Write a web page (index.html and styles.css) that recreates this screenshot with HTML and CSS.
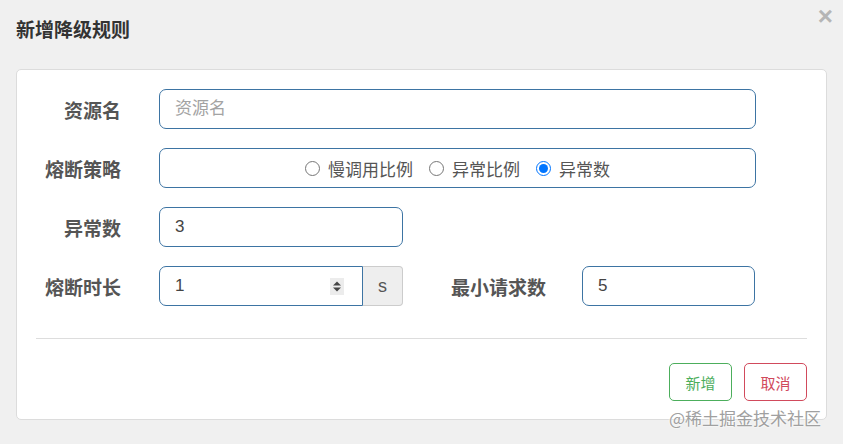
FILE: index.html
```html
<!DOCTYPE html>
<html lang="zh">
<head>
<meta charset="utf-8">
<title>新增降级规则</title>
<link rel="stylesheet" href="styles.css">
</head>
<body>
<div class="dialog">
  <div class="header">
    <h3 class="title">新增降级规则</h3>
    <span class="close">×</span>
  </div>
  <div class="card">
    <div class="form">
      <div class="row">
        <label class="label">资源名</label>
        <input class="ctl wide" type="text" placeholder="资源名">
      </div>
      <div class="row">
        <label class="label">熔断策略</label>
        <div class="ctl wide radios">
          <label class="radio"><input type="radio" name="s"><span>慢调用比例</span></label>
          <label class="radio"><input type="radio" name="s"><span>异常比例</span></label>
          <label class="radio"><input type="radio" name="s" checked><span>异常数</span></label>
        </div>
      </div>
      <div class="row">
        <label class="label">异常数</label>
        <input class="ctl short" type="text" value="3">
      </div>
      <div class="row">
        <label class="label">熔断时长</label>
        <div class="group">
          <div class="ctl num">
            <input class="bare" type="text" value="1">
            <svg class="spin" width="14" height="17" viewBox="0 0 14 17"><rect x="0" y="0" width="14" height="17" fill="#ececec"/><path d="M3 7.5 L7 3.5 L11 7.5 Z" fill="#444"/><path d="M3 9.5 L7 13.5 L11 9.5 Z" fill="#444"/></svg>
          </div>
          <span class="addon">s</span>
        </div>
        <label class="label2">最小请求数</label>
        <input class="ctl mid" type="text" value="5">
      </div>
    </div>
    <hr class="sep">
    <div class="actions">
      <button class="btn ok">新增</button>
      <button class="btn cancel">取消</button>
    </div>
  </div>
  <span class="mark">@稀土掘金技术社区</span>
</div>
</body>
</html>
```
FILE: styles.css
```css
html, body {
  margin: 0;
  padding: 0;
  background: #f0f0f0;
  font-family: "Noto Sans CJK SC", "Noto Sans", sans-serif;
}
.dialog {
  position: relative;
  width: 843px;
  height: 444px;
  box-sizing: border-box;
  padding: 0 16px;
}
.header {
  position: relative;
  height: 69px;
  display: flex;
  align-items: flex-start;
}
.title {
  margin: 15px 0 0 0;
  font-size: 19px;
  font-weight: bold;
  color: #333;
  line-height: 28px;
}
.close {
  position: absolute;
  right: -6px;
  top: 1px;
  font-size: 26px;
  font-family: "Liberation Sans", sans-serif;
  font-weight: bold;
  color: #b5b5b5;
  line-height: 30px;
}
.card {
  background: #fff;
  border: 1px solid #dcdcdc;
  border-radius: 5px;
  height: 351px;
  padding: 19px 19px 0 19px;
  box-sizing: border-box;
}
.form {
  display: flex;
  flex-direction: column;
  gap: 19px;
}
.row {
  display: flex;
  align-items: center;
  height: 40px;
}
.label {
  width: 85px;
  text-align: right;
  font-size: 19px;
  font-weight: bold;
  color: #555;
  margin-right: 38px;
}
.label2 {
  width: 97px;
  font-size: 19px;
  font-weight: bold;
  color: #555;
  margin-left: 48px;
  margin-right: 34px;
}
.ctl {
  box-sizing: border-box;
  height: 40px;
  border: 1px solid #3d74a3;
  border-radius: 7px;
  background: #fff;
  padding: 0 15px;
  font-size: 17px;
  color: #444;
  font-family: "Liberation Sans", "Noto Sans CJK SC", sans-serif;
  outline: none;
}
.ctl::placeholder {
  color: #a3a3a3;
  font-family: "Noto Sans CJK SC", sans-serif;
}
.wide { width: 597px; }
.short { width: 244px; }
.mid { width: 173px; }
.radios {
  display: flex;
  align-items: center;
  justify-content: center;
  gap: 16px;
  font-family: "Noto Sans CJK SC", sans-serif;
  color: #555;
}
.radio {
  display: flex;
  align-items: center;
  gap: 8px;
  font-size: 17px;
}
.radio input {
  margin: 0;
  width: 15px;
  height: 15px;
  accent-color: #0075ff;
}
.group {
  display: flex;
  height: 40px;
}
.num {
  width: 204px;
  display: flex;
  align-items: center;
  border-radius: 7px 0 0 7px;
  padding-right: 18px;
}
.bare {
  border: none;
  outline: none;
  flex: 1;
  min-width: 0;
  padding: 0;
  font-size: 17px;
  color: #444;
  font-family: "Liberation Sans", sans-serif;
  background: transparent;
}
.spin { flex: none; }
.addon {
  box-sizing: border-box;
  width: 40px;
  height: 40px;
  display: flex;
  align-items: center;
  justify-content: center;
  background: #eee;
  border: 1px solid #ccc;
  border-left: none;
  border-radius: 0 4px 4px 0;
  font-family: "Liberation Sans", sans-serif;
  font-size: 18px;
  color: #555;
}
.sep {
  border: none;
  border-top: 1px solid #ddd;
  margin: 32px 0 0 0;
}
.actions {
  display: flex;
  justify-content: flex-end;
  gap: 12px;
  margin-top: 24px;
}
.btn {
  box-sizing: border-box;
  width: 63px;
  height: 38px;
  background: #fff;
  border-radius: 5px;
  font-family: "Noto Sans CJK SC", sans-serif;
  font-size: 15px;
  padding: 0;
}
.ok { border: 1px solid #4cae5c; color: #4cae5c; }
.cancel { border: 1px solid #d14a5c; color: #d14a5c; }
.mark {
  position: absolute;
  left: 669px;
  top: 405px;
  font-size: 17px;
  color: #a0a0a0;
  text-shadow: 0 0 2px #fff, 0 0 2px #fff;
  white-space: nowrap;
}
```
